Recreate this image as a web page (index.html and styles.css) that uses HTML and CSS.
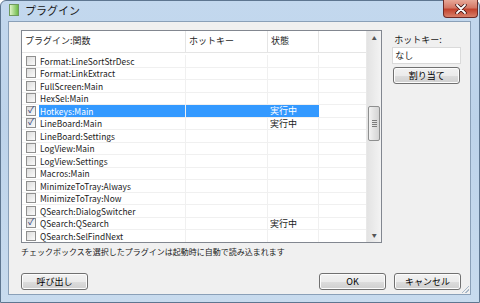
FILE: index.html
```html
<!DOCTYPE html>
<html lang="ja">
<head>
<meta charset="UTF-8">
<title>プラグイン</title>
<link rel="stylesheet" href="styles.css">
</head>
<body>
  <div class="window">
    <div class="titlebar">
      <span class="app-icon"></span>
      <span class="title">プラグイン</span>
      <span class="close">
        <svg width="12" height="10" viewBox="0 0 12 10"><path d="M2 1 L10 9 M10 1 L2 9" stroke="#3a1010" stroke-width="3.4" stroke-linecap="round"/><path d="M2 1 L10 9 M10 1 L2 9" stroke="#fff" stroke-width="1.8" stroke-linecap="round"/></svg>
      </span>
    </div>
    <div class="client">
      <div class="top">
        <div class="list">
          <div class="grid">
            <div class="row head">
              <div class="cell">プラグイン:関数</div>
              <div class="cell">ホットキー</div>
              <div class="cell">状態</div>
              <div class="cell"></div>
            </div>
            <div class="rows">
              <div class="row"><div class="cell name"><span class="cb"></span>Format:LineSortStrDesc</div><div class="cell"></div><div class="cell"></div><div class="cell"></div></div>
              <div class="row"><div class="cell name"><span class="cb"></span>Format:LinkExtract</div><div class="cell"></div><div class="cell"></div><div class="cell"></div></div>
              <div class="row"><div class="cell name"><span class="cb"></span>FullScreen:Main</div><div class="cell"></div><div class="cell"></div><div class="cell"></div></div>
              <div class="row"><div class="cell name"><span class="cb"></span>HexSel:Main</div><div class="cell"></div><div class="cell"></div><div class="cell"></div></div>
              <div class="row selected"><div class="cell name"><span class="cb checked"></span><span class="sel">Hotkeys:Main</span></div><div class="cell sel"></div><div class="cell sel">実行中</div><div class="cell"></div></div>
              <div class="row"><div class="cell name"><span class="cb checked"></span>LineBoard:Main</div><div class="cell"></div><div class="cell">実行中</div><div class="cell"></div></div>
              <div class="row"><div class="cell name"><span class="cb"></span>LineBoard:Settings</div><div class="cell"></div><div class="cell"></div><div class="cell"></div></div>
              <div class="row"><div class="cell name"><span class="cb"></span>LogView:Main</div><div class="cell"></div><div class="cell"></div><div class="cell"></div></div>
              <div class="row"><div class="cell name"><span class="cb"></span>LogView:Settings</div><div class="cell"></div><div class="cell"></div><div class="cell"></div></div>
              <div class="row"><div class="cell name"><span class="cb"></span>Macros:Main</div><div class="cell"></div><div class="cell"></div><div class="cell"></div></div>
              <div class="row"><div class="cell name"><span class="cb"></span>MinimizeToTray:Always</div><div class="cell"></div><div class="cell"></div><div class="cell"></div></div>
              <div class="row"><div class="cell name"><span class="cb"></span>MinimizeToTray:Now</div><div class="cell"></div><div class="cell"></div><div class="cell"></div></div>
              <div class="row"><div class="cell name"><span class="cb"></span>QSearch:DialogSwitcher</div><div class="cell"></div><div class="cell"></div><div class="cell"></div></div>
              <div class="row"><div class="cell name"><span class="cb checked"></span>QSearch:QSearch</div><div class="cell"></div><div class="cell">実行中</div><div class="cell"></div></div>
              <div class="row"><div class="cell name"><span class="cb"></span>QSearch:SelFindNext</div><div class="cell"></div><div class="cell"></div><div class="cell"></div></div>
              <div class="row"><div class="cell name"><span class="cb"></span></div><div class="cell"></div><div class="cell"></div><div class="cell"></div></div>
            </div>
          </div>
          <div class="scrollbar">
            <span class="arrow">&#9650;</span>
            <div class="track"><span class="thumb"><i></i><i></i><i></i><i></i></span></div>
            <span class="arrow">&#9660;</span>
          </div>
        </div>
        <div class="side">
          <div class="label">ホットキー:</div>
          <div class="input">なし</div>
          <button class="btn">割り当て</button>
        </div>
      </div>
      <div class="note">チェックボックスを選択したプラグインは起動時に自動で読み込まれます</div>
      <div class="bottom">
        <button class="btn">呼び出し</button>
        <div class="right">
          <button class="btn">OK</button>
          <button class="btn">キャンセル</button>
        </div>
      </div>
      <span class="grip"></span>
    </div>
  </div>
</body>
</html>
```

FILE: styles.css
```css
body {
  margin: 0;
  width: 480px;
  height: 303px;
  overflow: hidden;
  font-family: "Noto Sans CJK JP", "Noto Sans", sans-serif;
  font-size: 9px;
  color: #1a1a1a;
}
.window {
  height: 303px;
  box-sizing: border-box;
  padding: 0 8px 7px 7px;
  border: 1px solid #5e7690;
  border-radius: 6px 6px 0 0;
  background: linear-gradient(to bottom, #c3d8ee 0%, #bdd3ea 40%, #c8dbee 100%);
  display: flex;
  flex-direction: column;
}
.titlebar {
  height: 25px;
  display: flex;
  align-items: center;
  position: relative;
}
.app-icon {
  width: 8px;
  height: 10px;
  margin-left: 1px;
  margin-top: -2px;
  border: 1px solid #6f9a5e;
  background: linear-gradient(to right, #dff3c8, #6dbb4a);
}
.title {
  margin-left: 6px;
  margin-top: -3px;
  font-size: 11px;
}
.close {
  position: absolute;
  right: -7px;
  top: -1px;
  width: 33px;
  height: 17px;
  border: 1px solid #6d2a26;
  border-top: none;
  border-radius: 0 0 4px 4px;
  background: linear-gradient(to bottom, #e8a898 0%, #d47866 45%, #c2432e 55%, #d8806a 100%);
  display: flex;
  align-items: center;
  justify-content: center;
}
.client {
  flex: 1;
  position: relative;
  background: #f0f0f0;
  border: 1px solid #8aa0b8;
  padding: 8px 9px 4px 12px;
  display: flex;
  flex-direction: column;
}
.top {
  display: flex;
  gap: 11px;
}
.list {
  width: 361px;
  height: 211px;
  border: 1px solid #828790;
  background: #fff;
  display: flex;
  overflow: hidden;
}
.grid {
  flex: 1;
  overflow: hidden;
}
.row {
  display: grid;
  grid-template-columns: 164px 82px 51px 50px;
  height: 12.5px;
  line-height: 12.5px;
}
.row.head {
  height: 21px;
  line-height: 20px;
  border-bottom: 1px solid #e5e5e5;
  margin-bottom: 2px;
  color: #1e1e1e;
}
.row.head .cell {
  padding-left: 3px;
  border-right: 1px solid #e5e5e5;
}
.cell {
  border-right: 1px solid #f0f0f0;
  white-space: nowrap;
  overflow: hidden;
  padding-left: 2px;
}
.rows .row {
  border-bottom: 1px solid #f0f0f0;
  box-sizing: border-box;
}
.cell.name {
  display: flex;
  align-items: center;
  padding-left: 4px;
  font-size: 8.4px;
  letter-spacing: 0.05px;
}
.cb {
  width: 8px;
  height: 8px;
  border: 1px solid #8f8f8f;
  background: linear-gradient(135deg, #dcdcdc, #fbfbfb);
  margin-right: 4px;
  flex: none;
  position: relative;
}
.cb.checked::after {
  content: "✓";
  position: absolute;
  left: 1px;
  top: -3px;
  font-size: 9px;
  line-height: 12px;
  color: #2a3e7a;
}
.sel {
  background: #3399ff;
  color: #fff;
}
.name .sel {
  flex: 1;
  padding-left: 1px;
  margin-left: -1px;
}
.selected .cell.sel {
  border-right-color: #3399ff;
}
.scrollbar {
  width: 14px;
  background: linear-gradient(to right, #e3e3e3, #f3f3f3);
  border-left: 1px solid #e8e8e8;
  display: flex;
  flex-direction: column;
  align-items: center;
}
.arrow {
  font-size: 5px;
  color: #555;
  height: 14px;
  line-height: 14px;
}
.track {
  flex: 1;
  width: 100%;
  position: relative;
}
.thumb {
  position: absolute;
  left: 1px;
  top: 61px;
  width: 10px;
  height: 33px;
  border: 1px solid #8e8f8f;
  border-radius: 2px;
  background: linear-gradient(to right, #f3f3f3, #e2e2e2 50%, #d4d4d4);
  display: flex;
  flex-direction: column;
  justify-content: center;
  align-items: center;
  gap: 1px;
}
.thumb i {
  width: 5px;
  height: 1px;
  background: #7c7c7c;
}
.side {
  width: 68px;
  display: flex;
  flex-direction: column;
}
.label {
  margin-top: 2px;
  height: 15px;
  line-height: 15px;
  padding-left: 1px;
}
.input {
  height: 15px;
  line-height: 15px;
  background: #fff;
  border: 1px solid #dadada;
  padding-left: 2px;
  margin-left: -1px;
}
.btn {
  font-family: inherit;
  font-size: 9px;
  width: 67px;
  height: 17px;
  padding: 0;
  border: 1px solid #707070;
  border-radius: 3px;
  background: linear-gradient(to bottom, #f2f2f2 0%, #ebebeb 50%, #dddddd 51%, #cfcfcf 100%);
  box-shadow: inset 0 0 0 1px #fcfcfc;
  color: #000;
}
.side .btn {
  margin-top: 3px;
}
.note {
  margin-top: 2px;
  height: 13px;
  line-height: 13px;
  font-size: 8px;
}
.bottom {
  margin-top: 15px;
  display: flex;
  justify-content: space-between;
}
.right {
  display: flex;
  gap: 8px;
}
.grip {
  position: absolute;
  right: 1px;
  bottom: 1px;
  width: 8px;
  height: 8px;
  background: linear-gradient(135deg, transparent 55%, #a8b8c8 55%, #a8b8c8 62%, transparent 62%, transparent 75%, #a8b8c8 75%, #a8b8c8 82%, transparent 82%);
}
```
